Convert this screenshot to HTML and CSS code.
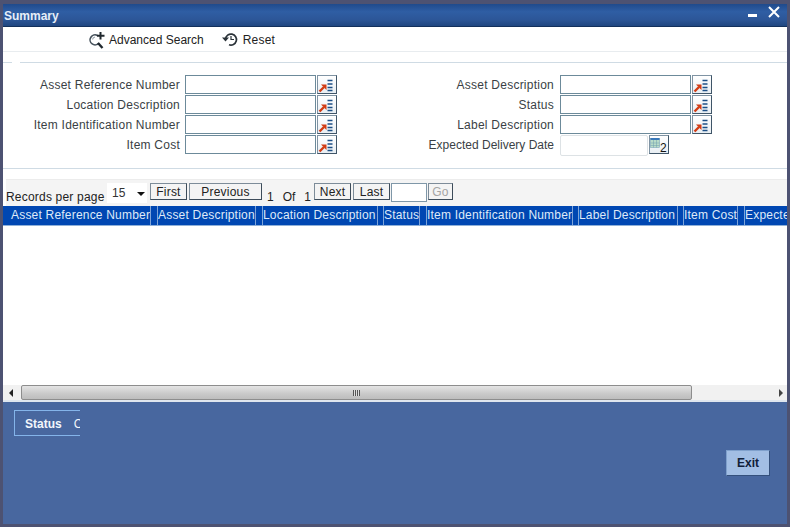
FILE: index.html
```html
<!DOCTYPE html>
<html lang="en">
<head>
<meta charset="utf-8">
<title>Summary</title>
<link rel="stylesheet" href="styles.css">
</head>
<body>
<svg class="defs" width="0" height="0" aria-hidden="true">
  <symbol id="lov" viewBox="0 0 18 16">
    <path d="M1.5 14.5L6 10" fill="none" stroke="#d23c14" stroke-width="2.4"/>
    <path d="M3 7.5H8.5V13Z" fill="#d23c14"/>
    <path d="M9.5 3.5H14.5M9.5 7H14.5M9.5 10.5H14.5M9.5 13.5H14.5" fill="none" stroke="#1c4f86" stroke-width="1.6"/>
  </symbol>
</svg>
<main class="window">
  <header class="titlebar">
    <h1 class="title">Summary</h1>
    <div class="winctl">
      <span class="minimize"></span>
      <svg class="close" width="12" height="12" viewBox="0 0 12 12"><path d="M1 1L11 11M11 1L1 11" stroke="#fff" stroke-width="2"/></svg>
    </div>
  </header>
  <nav class="toolbar">
    <span class="tool tool-search">
      <svg width="18" height="18" viewBox="0 0 18 18"><path d="M9.5 4.5A5 5 0 1 0 11 12" fill="none" stroke="#46525c" stroke-width="1.6"/><path d="M4.5 8.5A3 3 0 0 1 7 6" fill="none" stroke="#9aa5ad" stroke-width="1.2"/><path d="M10 12L14.5 17" stroke="#20282e" stroke-width="2.4"/><path d="M12.5 1V8.5M9 4.7H16.5" stroke="#20282e" stroke-width="2"/></svg>
      Advanced Search
    </span>
    <span class="tool tool-reset">
      <svg width="16" height="15" viewBox="0 0 16 15"><path d="M3.5 7A5.5 5.5 0 1 1 7 12.7" fill="none" stroke="#2a3238" stroke-width="1.7"/><path d="M0 5.5H7L3.5 9.5Z" fill="#2a3238"/><path d="M9 4V7.5H12" fill="none" stroke="#2a3238" stroke-width="1.2"/></svg>
      Reset
    </span>
  </nav>
  <section class="search">
    <div class="legend-gap"></div>
    <form class="fields">
      <label class="lbl">Asset Reference Number</label>
      <div class="ctl"><input class="inp" type="text"><button class="lov" type="button"><svg width="18" height="16"><use href="#lov"/></svg></button></div>
      <label class="lbl lbl-r">Asset Description</label>
      <div class="ctl"><input class="inp" type="text"><button class="lov" type="button"><svg width="18" height="16"><use href="#lov"/></svg></button></div>
      <label class="lbl">Location Description</label>
      <div class="ctl"><input class="inp" type="text"><button class="lov" type="button"><svg width="18" height="16"><use href="#lov"/></svg></button></div>
      <label class="lbl lbl-r">Status</label>
      <div class="ctl"><input class="inp" type="text"><button class="lov" type="button"><svg width="18" height="16"><use href="#lov"/></svg></button></div>
      <label class="lbl">Item Identification Number</label>
      <div class="ctl"><input class="inp" type="text"><button class="lov" type="button"><svg width="18" height="16"><use href="#lov"/></svg></button></div>
      <label class="lbl lbl-r">Label Description</label>
      <div class="ctl"><input class="inp" type="text"><button class="lov" type="button"><svg width="18" height="16"><use href="#lov"/></svg></button></div>
      <label class="lbl">Item Cost</label>
      <div class="ctl"><input class="inp" type="text"><button class="lov" type="button"><svg width="18" height="16"><use href="#lov"/></svg></button></div>
      <label class="lbl lbl-r lbl-tight">Expected Delivery Date</label>
      <div class="ctl"><input class="inp inp-date" type="text">
        <button class="cal" type="button"><svg width="18" height="16" viewBox="0 0 18 16"><rect x="0.5" y="1.5" width="9" height="9" fill="#b9dcc8" stroke="#7aa6b8" stroke-width=".6"/><rect x="0.5" y="1" width="9" height="2" fill="#3a78b8"/><path d="M3.5 3V10.5M6.5 3V10.5M.5 6H9.5M.5 8.5H9.5" stroke="#6f9fb0" stroke-width=".5"/><text x="10" y="14.5" class="cal-num">2</text></svg></button></div>
    </form>
  </section>
  <div class="pager">
    <span class="rpp">Records per page</span>
    <span class="select">15<i class="caret"></i></span>
    <button class="pbtn pbtn-first" type="button">First</button>
    <button class="pbtn pbtn-prev" type="button">Previous</button>
    <span class="count count-a">1</span>
    <span class="count count-of">Of</span>
    <span class="count count-b">1</span>
    <button class="pbtn pbtn-next" type="button">Next</button>
    <button class="pbtn pbtn-last" type="button">Last</button>
    <input class="pageinp" type="text">
    <button class="pbtn pbtn-go" type="button">Go</button>
  </div>
  <div class="thead">
    <span class="th w1">Asset Reference Number</span><span class="th-gap g7"></span>
    <span class="th w2">Asset Description</span><span class="th-gap g7"></span>
    <span class="th w3">Location Description</span><span class="th-gap"></span>
    <span class="th w4">Status</span><span class="th-gap g7"></span>
    <span class="th w5">Item Identification Number</span><span class="th-gap"></span>
    <span class="th w6">Label Description</span><span class="th-gap"></span>
    <span class="th w7">Item Cost</span><span class="th-gap g7"></span>
    <span class="th w8">Expected Delivery Date</span>
  </div>
  <div class="tbody"></div>
  <div class="hscroll">
    <span class="arrow arrow-l"></span>
    <div class="thumb"><span class="grip"></span></div>
    <span class="arrow arrow-r"></span>
  </div>
  <footer class="footer">
    <div class="status-col">
      <div class="status"><b class="status-key">Status</b><span class="status-val">C</span></div>
    </div>
    <button class="exit" type="button">Exit</button>
  </footer>
</main>
</body>
</html>
```
FILE: styles.css
```css
* { box-sizing: border-box; }
html, body { margin: 0; height: 100%; }
body {
  width: 790px; height: 527px; overflow: hidden;
  background: #4d5272;
  padding: 4px 3px 3px;
  font-family: "Liberation Sans", Arial, sans-serif;
  font-size: 12px;
  color: #333;
}
.defs { position: absolute; }
.window { display: flex; flex-direction: column; height: 520px; background: #fff; }

.titlebar {
  height: 23px; flex: none;
  display: flex; justify-content: space-between;
  background: linear-gradient(#1f4a8c, #2f5ea4 35%, #2c5698 70%, #1f4680);
  border-bottom: 1px solid #12305c;
}
.title { margin: 0; padding: 5px 0 0 1px; font-size: 12px; line-height: 15px; font-weight: bold; color: #e6eef8; }
.winctl { display: flex; align-items: flex-start; }
.minimize { width: 9px; height: 3px; background: #fff; margin: 10px 11px 0 0; }
.close { margin: 2px 7px 0 0; }

.toolbar {
  height: 25px; flex: none; padding-top: 1px;
  display: flex; align-items: center;
  border-bottom: 1px solid #e8ecef;
  color: #222;
}
.tool { display: inline-flex; align-items: center; gap: 3px; }
.tool-search { margin-left: 85px; }
.tool-reset { margin-left: 18px; gap: 5px; letter-spacing: .2px; }

.search {
  margin-top: 10px; height: 107px; flex: none;
  border-top: 1px solid #cfdbe4;
  border-bottom: 1px solid #cfdbe4;
  position: relative;
}
.legend-gap { position: absolute; left: 9px; top: -1px; width: 8px; height: 1px; background: #fff; }
.fields {
  display: grid;
  grid-template-columns: 177px 197px 178px 1fr;
  grid-auto-rows: 20px;
  margin-top: 12px;
}
.lbl { text-align: right; line-height: 20px; color: #3a3f45; letter-spacing: .24px; white-space: nowrap; }
.lbl-r { padding-right: 1px; }
.lbl-tight { letter-spacing: 0; }
.ctl { display: flex; align-items: flex-start; padding-left: 5px; gap: 1px; height: 20px; }
.inp {
  width: 131px; height: 19px; padding: 0;
  background: #fff; border: 1px solid #6c8a9a;
  border-radius: 0; outline: 0;
}
.inp-date { width: 88px; height: 21px; border-color: #dde2e5; border-radius: 2px; }
.lov, .cal {
  width: 20px; height: 19px; padding: 0; flex: none;
  display: flex; align-items: center; justify-content: center;
  background: linear-gradient(#fff, #e8eef3);
  border: 1px solid #7f93a3;
  border-right-color: #3f5568; border-bottom-color: #3f5568;
}
.cal-num { font: 12px "Liberation Sans", sans-serif; fill: #111; }

.pager {
  margin: 10px 0 0 3px; height: 27px; flex: none;
  background: #f4f4f4;
  border-top: 1px solid #ececec;
  display: flex; align-items: flex-start;
  color: #222;
}
.rpp { flex: none; width: 101px; margin-top: 10px; line-height: 15px; letter-spacing: .2px; white-space: nowrap; }
.select {
  flex: none; margin: 3px 0 0 0; width: 40px; height: 20px;
  background: #fff; padding-left: 5px; line-height: 20px; color: #333;
  position: relative;
}
.caret {
  position: absolute; left: 30px; top: 9px;
  border: 4.5px solid transparent; border-top: 4.5px solid #111; border-bottom: 0;
}
.pbtn {
  flex: none; height: 17px; padding: 1px 0 0; margin: 3px 0 0;
  font: 12px/14px "Liberation Sans", sans-serif; letter-spacing: .2px; color: #222;
  background: #f4f4f4;
  border: 1px solid #7d8c99; border-right-color: #3d4c5a; border-bottom-color: #3d4c5a;
}
.pbtn-first { width: 37px; margin-left: 3px; }
.pbtn-prev { width: 73px; margin-left: 2px; }
.pbtn-next { width: 37px; margin-left: 3px; }
.pbtn-last { width: 37px; margin-left: 2px; }
.pbtn-go { width: 25px; margin-left: 1px; color: #a5a5a5; }
.count { flex: none; margin-top: 10px; line-height: 15px; }
.count-a { margin-left: 5px; }
.count-of { margin-left: 9px; }
.count-b { margin-left: 9px; }
.pageinp { flex: none; width: 36px; height: 19px; margin: 3px 0 0 1px; padding: 0; background: #fff; border: 1px solid #7f97a8; border-radius: 0; outline: 0; }

.thead {
  height: 20px; flex: none; display: flex;
  background: #0047b2;
  border-bottom: 1px solid #8fb0d8;
  color: #dfeaf8; overflow: hidden;
}
.th { flex: none; height: 19px; line-height: 18px; letter-spacing: .2px; white-space: nowrap; overflow: hidden; border-right: 1px solid #7ea4d8; }
.th-gap { flex: none; width: 6px; border-right: 1px solid #7ea4d8; }
.g7 { width: 7px; }
.w1 { width: 148px; padding-left: 8px; }
.w2 { width: 98px; }
.w3 { width: 115px; }
.w4 { width: 36px; }
.w5 { width: 146px; }
.w6 { width: 99px; }
.w7 { width: 54px; }
.w8 { width: 42px; border-right: 0; }

.tbody { flex: 1; background: #fff; }

.hscroll {
  height: 17px; flex: none; display: flex; align-items: flex-start;
  background: #f1f1f1; border-bottom: 2px solid #dfe6ee;
}
.arrow { flex: none; width: 18px; height: 15px; position: relative; }
.arrow::before {
  content: ""; position: absolute; top: 4px; border: 4px solid transparent;
}
.arrow-l::before { left: 6px; border-left: 0; border-right: 4px solid #222; }
.arrow-r { margin-left: auto; }
.arrow-r::before { left: 10px; border-right: 0; border-left: 4px solid #444; }
.thumb {
  flex: none; width: 671px; height: 15px;
  display: flex; align-items: center; justify-content: center;
  background: linear-gradient(#e4e4e4, #c9c9c9 60%, #bdbdbd);
  border: 1px solid #8d8d8d; border-radius: 2px;
}
.grip { width: 7px; height: 6px; background: repeating-linear-gradient(90deg, #555 0 1px, #ddd 1px 2px); }

.footer {
  flex: none; height: 122px; background: #48679f;
  display: flex; justify-content: space-between; align-items: flex-start;
}
.status-col { margin: 8px 0 0 11px; }
.status {
  width: 66px; height: 26px; display: flex; align-items: center; overflow: hidden;
  border: 1px solid #84b4ea; border-right: 0;
  padding: 2px 0 0 10px; color: #f2f6fb; font-size: 12px;
}
.status-val { margin-left: 12px; }
.exit {
  width: 44px; height: 26px; margin: 48px 17px 0 0; padding: 0;
  font: bold 12px "Liberation Sans", sans-serif; color: #10203a;
  background: #a2bee4;
  border: 1px solid #7fa0cc; border-right-color: #34507c; border-bottom-color: #34507c;
}
```
